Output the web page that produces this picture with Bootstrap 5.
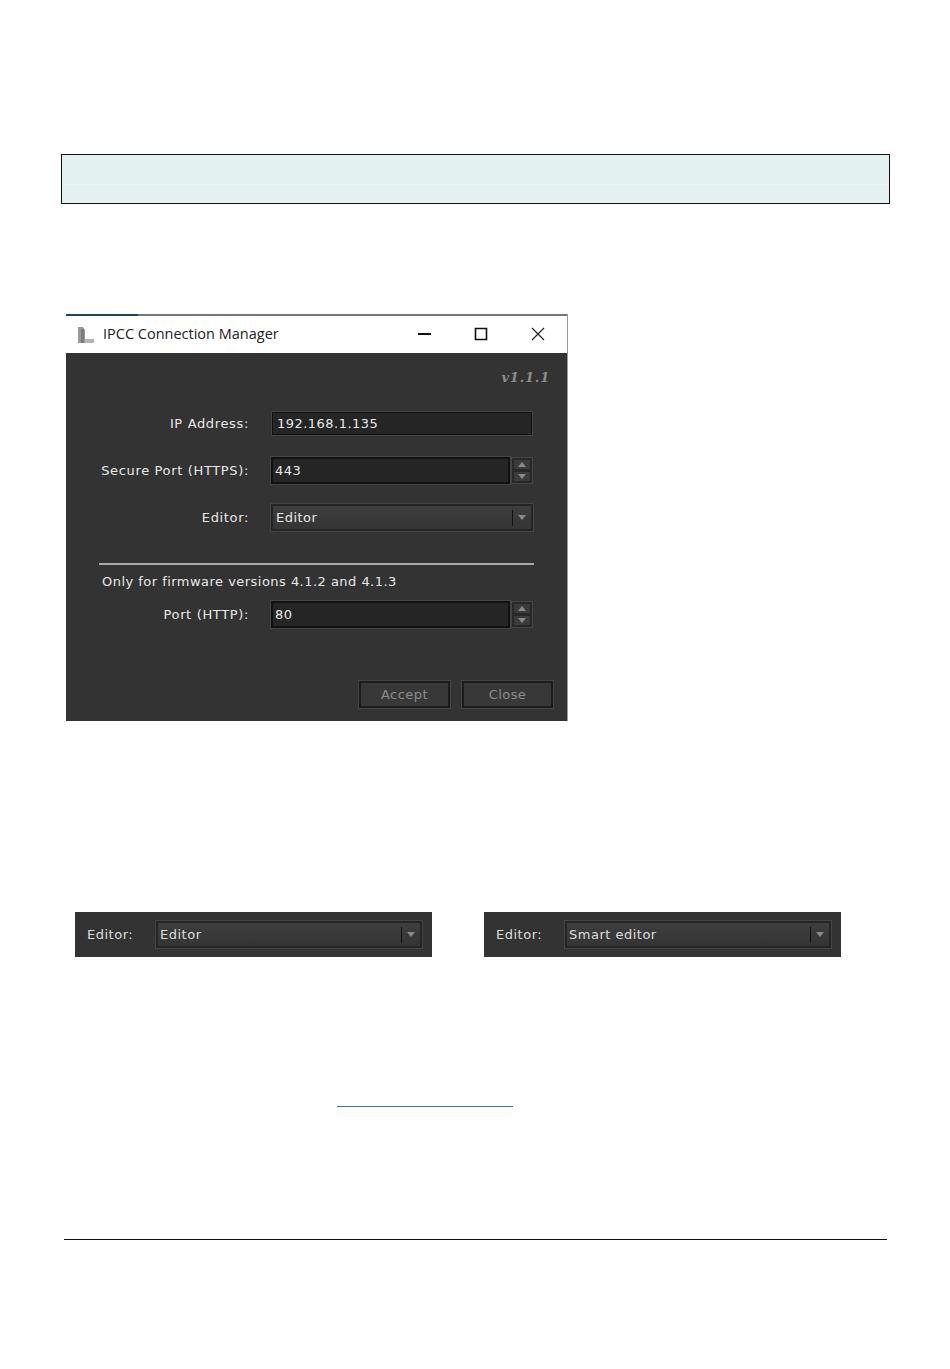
<!DOCTYPE html>
<html lang="en">
<head>
  <meta charset="UTF-8">
  <meta name="viewport" content="width=device-width, initial-scale=1.0">
  <title>IPCC Connection Manager</title>
  <link href="https://cdn.jsdelivr.net/npm/bootstrap@5.3.0/dist/css/bootstrap.min.css" rel="stylesheet">
  <style>
    body {
      background-color: #fff;
      height: 1369px;
      overflow: hidden;
      font-family: "DejaVu Sans", sans-serif;
    }

    .note-box {
      height: 50px;
      margin: 154px 60px 0 61px;
      background: linear-gradient(#e3f1f0 29px, #edf6f5 29px, #edf6f5 30px, #e3f1f0 30px);
      border: 1.5px solid #111;
    }

    /* dialog window */
    .ipcc-window {
      width: 502px;
      height: 407px;
      margin: 110px 0 0 66px;
      background-color: #333;
      border-right: 1px solid #999;
      color: #e8e8e8;
      font-size: 13px;
      letter-spacing: .47px;
    }

    .ipcc-edge {
      height: 2px;
      background: linear-gradient(to right, #1c4560 72px, #777 72px);
    }

    .ipcc-title {
      height: 37px;
      background-color: #fff;
      color: #222;
      font-family: "Open Sans", sans-serif;
      font-size: 14.5px;
      letter-spacing: 0;
      padding-left: 11px;
    }

    .ipcc-title .title-text {
      margin-left: 8px;
      margin-bottom: 1px;
    }

    .win-btn {
      width: 20px;
      height: 20px;
      margin-bottom: 2px;
    }

    .win-btns {
      gap: 37px;
      padding-right: 19px;
    }

    .ipcc-version {
      height: 48px;
      padding: 15px 17px 0 0;
      color: #8d8d8d;
      font-family: "DejaVu Serif", serif;
      font-size: 13px;
      font-weight: bold;
      font-style: italic;
      letter-spacing: .8px;
    }

    .field-row {
      display: flex;
      align-items: center;
      height: 27px;
      margin-bottom: 20px;
      padding-right: 34px;
    }

    .field-row.ip-row {
      margin-top: 9px;
    }

    .field-row.last-row {
      margin-bottom: 0;
    }

    .field-label {
      width: 183px;
      margin-right: 22px;
      text-align: right;
      letter-spacing: .65px;
    }

    .field-input.form-control {
      flex: 1;
      height: 100%;
      padding: 0 2px;
      font-size: 13px;
      line-height: 1;
      display: flex;
      align-items: center;
      color: #e8e8e8;
      background-color: #252525;
      border: 2px solid #111;
      border-radius: 0;
      box-shadow: 0 0 0 1px #444;
    }

    .field-input.form-control.ip-input {
      height: 23px;
      margin: 0 1px 0 1px;
      padding: 0 4px;
      border-width: 1.5px;
    }

    .spin-box {
      width: 22px;
      height: 27px;
      margin-left: 1px;
      padding: 1px;
      border: 1px solid #444;
      background-color: #2a2a2a;
    }

    .spin-btn {
      height: 11px;
      background-color: #3b3b3b;
      border: 1px solid #262626;
      margin-bottom: 1px;
    }

    .tri-up, .tri-down {
      width: 0;
      height: 0;
      border-left: 4px solid transparent;
      border-right: 4px solid transparent;
    }

    .tri-up { border-bottom: 5px solid #8a8a8a; }
    .tri-down { border-top: 5px solid #8a8a8a; }

    .combo-box {
      flex: 1;
      height: 100%;
      padding: 0 5px 0 3px;
      background: linear-gradient(#3e3e3e, #343434);
      border: 2px solid #252525;
      box-shadow: 0 0 0 1px #444;
    }

    .combo-sep {
      width: 1px;
      height: 16px;
      background-color: #111;
      margin-right: 5px;
    }

    .ipcc-rule {
      height: 2px;
      margin: 32px 33px 0 33px;
      background-color: #a8a8a8;
      opacity: 1;
      border: 0;
    }

    .only-note {
      margin: 9px 0 12px 36px;
      line-height: 15px;
    }

    .ipcc-actions {
      margin-top: 53px;
      padding-right: 14px;
      gap: 12px;
    }

    .ipcc-btn.btn {
      width: 91px;
      height: 27px;
      padding: 0;
      font-size: 13px;
      letter-spacing: .45px;
      color: #8c8c8c;
      background-color: #383838;
      border: 2px solid #1c1c1c;
      border-radius: 0;
      box-shadow: 0 0 0 1px #444;
    }

    /* the two cropped editor strips */
    .strip-row {
      margin: 191px 0 0 75px;
      gap: 52px;
    }

    .editor-strip {
      width: 357px;
      height: 45px;
      padding: 9px 10px 9px 12px;
      background-color: #333;
      color: #ddd;
      font-size: 13px;
      letter-spacing: .5px;
    }

    .editor-strip .strip-label {
      width: 69px;
    }

    .editor-strip .combo-box {
      height: 27px;
      padding-left: 2px;
    }

    .blank-link {
      display: block;
      width: 176px;
      height: 1px;
      margin: 149px 0 0 337px;
      background-color: #2f75d6;
    }

    .footer-rule {
      height: 1px;
      margin: 132px 63px 0 64px;
      background-color: #111;
      opacity: 1;
      border: 0;
    }
  </style>
</head>
<body>
  <div class="note-box"></div>

  <div class="ipcc-window">
    <div class="ipcc-edge"></div>
    <div class="ipcc-title d-flex align-items-center">
      <svg width="18" height="18" viewBox="0 0 18 18">
        <path d="M1 1h5l2 3v13H1z" fill="#9a9a9a"/>
        <path d="M4 3h3v14H4z" fill="#7c7c7c"/>
        <path d="M8 13h9v4H8z" fill="#b4b4b4"/>
      </svg>
      <span class="title-text flex-grow-1">IPCC Connection Manager</span>
      <div class="win-btns d-flex">
        <svg class="win-btn" viewBox="0 0 20 20"><path d="M4 10h13" stroke="#111" stroke-width="2"/></svg>
        <svg class="win-btn" viewBox="0 0 20 20"><path d="M4.5 4.500h11v11h-11z" fill="none" stroke="#111" stroke-width="1.600"/></svg>
        <svg class="win-btn" viewBox="0 0 20 20"><path d="M4 4l12 12M16 4L4 16" stroke="#222" stroke-width="1.200"/></svg>
      </div>
    </div>

    <div class="ipcc-version text-end">v1.1.1</div>

    <div class="field-row ip-row">
      <div class="field-label">IP Address:</div>
      <div class="form-control field-input ip-input">192.168.1.135</div>
    </div>
    <div class="field-row">
      <div class="field-label">Secure Port (HTTPS):</div>
      <div class="form-control field-input">443</div>
      <div class="spin-box">
        <div class="spin-btn d-flex justify-content-center align-items-center"><div class="tri-up"></div></div>
        <div class="spin-btn d-flex justify-content-center align-items-center"><div class="tri-down"></div></div>
      </div>
    </div>
    <div class="field-row last-row">
      <div class="field-label">Editor:</div>
      <div class="combo-box d-flex align-items-center">
        <span class="flex-grow-1">Editor</span>
        <div class="combo-sep"></div>
        <div class="tri-down"></div>
      </div>
    </div>

    <hr class="ipcc-rule">
    <div class="only-note">Only for firmware versions 4.1.2 and 4.1.3</div>

    <div class="field-row last-row">
      <div class="field-label">Port (HTTP):</div>
      <div class="form-control field-input">80</div>
      <div class="spin-box">
        <div class="spin-btn d-flex justify-content-center align-items-center"><div class="tri-up"></div></div>
        <div class="spin-btn d-flex justify-content-center align-items-center"><div class="tri-down"></div></div>
      </div>
    </div>

    <div class="ipcc-actions d-flex justify-content-end">
      <button type="button" class="btn ipcc-btn">Accept</button>
      <button type="button" class="btn ipcc-btn">Close</button>
    </div>
  </div>

  <div class="strip-row d-flex">
    <div class="editor-strip d-flex align-items-center">
      <div class="strip-label">Editor:</div>
      <div class="combo-box d-flex align-items-center">
        <span class="flex-grow-1">Editor</span>
        <div class="combo-sep"></div>
        <div class="tri-down"></div>
      </div>
    </div>
    <div class="editor-strip d-flex align-items-center">
      <div class="strip-label">Editor:</div>
      <div class="combo-box d-flex align-items-center">
        <span class="flex-grow-1">Smart editor</span>
        <div class="combo-sep"></div>
        <div class="tri-down"></div>
      </div>
    </div>
  </div>

  <a class="blank-link" href="#" aria-label="link"></a>
  <hr class="footer-rule">

  <script src="https://cdn.jsdelivr.net/npm/bootstrap@5.3.0/dist/js/bootstrap.bundle.min.js"></script>
</body>
</html>
